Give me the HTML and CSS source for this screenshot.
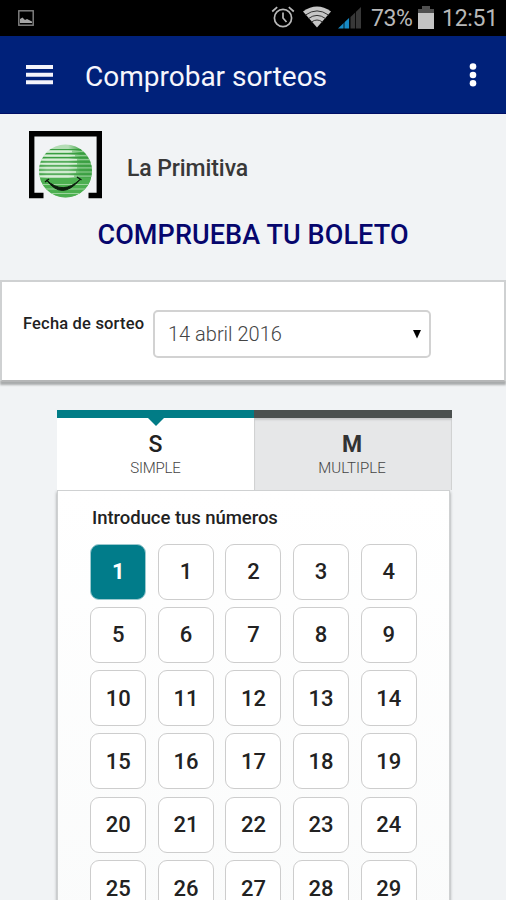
FILE: index.html
```html
<!DOCTYPE html>
<html lang="es">
<head>
<meta charset="utf-8">
<title>Comprobar sorteos</title>
<link rel="stylesheet" href="styles.css">
</head>
<body>
<div class="status">
  <svg class="st-pic" width="16" height="16" viewBox="0 0 16 16"><rect x=".8" y=".8" width="14.4" height="14.4" fill="none" stroke="#858585" stroke-width="1.4"/><path d="M2 13V9l2.500-1.500L7 10l2-1 5 2.500V13z" fill="#a5a5a5"/></svg>
  <svg class="st-alarm" width="24" height="24" viewBox="0 0 24 24" fill="none" stroke="#b9b9b9" stroke-width="1.700"><circle cx="12" cy="13" r="8.600"/><path d="M12 7.500V13l3.500 4M1.200 6.500l5-4.300M22.800 6.500l-5-4.300"/></svg>
  <svg class="st-wifi" width="28" height="22" viewBox="0 0 28 22"><path d="M0 5.500Q14-4.500 28 5.500L14 21.500z" fill="#c6c6c6"/><path d="M2.500 9Q14 .8 25.500 9M5.500 12.500Q14 6.300 22.500 12.500M8.500 16Q14 12 19.500 16" fill="none" stroke="#333" stroke-width="1"/></svg>
  <svg class="st-signal" width="24" height="22" viewBox="0 0 24 22"><path d="M0 21.500L11.500 10.500V21.500z" fill="#1789c4"/><path d="M12.500 10L23 0V21.500H12.500z" fill="#383838"/><path d="M6 12v10M11.500 8v14M17.500 2v20" stroke="#000" stroke-width=".8"/></svg>
  <span class="pct">73%</span>
  <svg class="st-batt" width="16" height="23" viewBox="0 0 16 23"><path d="M4 0h8v3h4v5H0V3h4z" fill="#505050"/><path d="M0 7h16v16H0z" fill="#c4c4c4"/></svg>
  <span class="clock">12:51</span>
</div>
<header class="bar">
  <svg class="menu" width="27" height="20" viewBox="0 0 27 20" fill="#f4f4fb"><path d="M0 0h27v4H0zM0 7.700h27v4H0zM0 15.300h27v4H0z"/></svg>
  <h1>Comprobar sorteos</h1>
  <svg class="more" width="8" height="24" viewBox="0 0 8 24" fill="#fff"><circle cx="4" cy="3.500" r="3.300"/><circle cx="4" cy="12" r="3.300"/><circle cx="4" cy="20.300" r="3.300"/></svg>
</header>
<section class="game">
  <svg class="logo" width="74" height="68" viewBox="0 0 74 68">
    <defs>
      <clipPath id="ball"><circle cx="36.500" cy="40" r="26.500"/></clipPath>
      <linearGradient id="shade" x1="0" x2="1" y1="0" y2="0"><stop offset="0" stop-color="#7ac27e"/><stop offset=".15" stop-color="#b4ddb5"/><stop offset=".55" stop-color="#b4ddb5"/><stop offset=".78" stop-color="#49a94e"/><stop offset="1" stop-color="#43a348"/></linearGradient>
    </defs>
    <path d="M14.500 64.500H2.700V2.800H70.300V64.500H59.500" fill="none" stroke="#000" stroke-width="5.400"/>
    <g clip-path="url(#ball)">
      <rect x="10" y="13" width="53" height="54" fill="url(#shade)"/>
      <path d="M10 47h53v20H10z" fill="#4caf50"/>
      <path d="M10 18.500h53M10 22.600h53M10 26.700h53M10 30.800h53M10 34.900h53M10 39h53M10 43.100h53" stroke="#389d40" stroke-width="1.200"/>
      <path d="M10 20.500h33M10 24.600h36M10 28.700h38M10 32.800h38M10 36.900h38M10 41h37M10 45.200h35" stroke="#d8eed8" stroke-width="1.400"/>
      <path d="M43 20.500h20M46 24.600h17M48 28.700h15M48 32.800h15M48 36.900h15M47 41h16M45 45.200h18" stroke="#8fcc92" stroke-width="1.200"/>
      <path d="M10 53.500h53M10 58h53M10 62.500h53" stroke="#9bd39c" stroke-width="1.200"/>
    </g>
    <path d="M17.500 49Q33 70 51 48.500Q34 64.500 17.500 49z" fill="#0b1c0d" stroke="#0b1c0d" stroke-width="1"/><path d="M16 51l4-3M48 46l4.500 3" stroke="#0b1c0d" stroke-width="1.500"/>
  </svg>
  <h2>La Primitiva</h2>
</section>
<h3 class="title">COMPRUEBA TU BOLETO</h3>
<section class="draw">
  <label>Fecha de sorteo</label>
  <div class="select"><span>14 abril 2016</span><svg width="8" height="9" viewBox="0 0 8 9"><path d="M0 0h8L4 8.500z"/></svg></div>
</section>
<main class="ticket">
  <nav class="tabs">
    <div class="tab active"><b>S</b><span>SIMPLE</span></div>
    <div class="tab"><b>M</b><span>MULTIPLE</span></div>
  </nav>
  <section class="panel">
    <h4>Introduce tus números</h4>
    <div class="grid">
      <div class="n on">1</div><div class="n">1</div><div class="n">2</div><div class="n">3</div><div class="n">4</div>
      <div class="n">5</div><div class="n">6</div><div class="n">7</div><div class="n">8</div><div class="n">9</div>
      <div class="n">10</div><div class="n">11</div><div class="n">12</div><div class="n">13</div><div class="n">14</div>
      <div class="n">15</div><div class="n">16</div><div class="n">17</div><div class="n">18</div><div class="n">19</div>
      <div class="n">20</div><div class="n">21</div><div class="n">22</div><div class="n">23</div><div class="n">24</div>
      <div class="n">25</div><div class="n">26</div><div class="n">27</div><div class="n">28</div><div class="n">29</div>
    </div>
  </section>
</main>
</body>
</html>
```
FILE: styles.css
```css
* { box-sizing: border-box; }
html, body { height: 900px; overflow: hidden; }
body { margin: 0; background: #f1f3f5; font-family: Roboto, "Liberation Sans", sans-serif; color: #222; }
h1, h2, h3, h4 { margin: 0; white-space: nowrap; }
svg { display: block; flex: none; }

.status { height: 36px; background: #000; color: #b8b8b8; display: flex; align-items: flex-start; padding-left: 18px; font-size: 23px; line-height: 36px; white-space: nowrap; }
.st-pic { margin-top: 10px; }
.st-alarm { margin: 5px 0 0 237px; }
.st-wifi { margin: 6px 0 0 8px; }
.st-signal { margin: 7px 0 0 7px; }
.pct { width: 42px; margin: 1px 0 0 9px; letter-spacing: -.4px; }
.st-batt { margin: 6px 0 0 5px; }
.clock { margin: 1px 0 0 8px; letter-spacing: -.3px; }

.bar { height: 78px; background: #00217a; border-bottom: 1px solid #000f66; display: flex; align-items: center; padding: 0 29px 0 26px; color: #f6f6fc; }
.menu { margin-top: 1px; }
.bar h1 { flex: 1; margin: 3px 0 0 32px; font-size: 28px; font-weight: 400; }

.game { height: 103px; padding: 17px 0 0 29px; display: flex; }
.game h2 { margin: 23px 0 0 24px; font-size: 23px; line-height: 30px; font-weight: 500; color: #383838; letter-spacing: -.1px; }
.title { height: 63px; text-align: center; font-size: 27px; line-height: 36px; font-weight: 500; color: #06066d; letter-spacing: .1px; }

.draw { height: 102px; background: #fff; border: 2px solid #cfd1d2; border-bottom-color: #b5b6b7; box-shadow: 0 3px 2px #a9abac; display: flex; padding: 28px 0 0 21px; }
.draw label { width: 130px; font-size: 16.500px; line-height: 28px; font-weight: 500; letter-spacing: .18px; white-space: nowrap; }
.select { width: 278px; height: 48px; border: 2px solid #d2d2d2; border-radius: 5px; display: flex; align-items: center; justify-content: space-between; padding: 0 8px 0 13px; font-size: 20px; color: #444; font-weight: 300; }

.ticket { width: 395px; margin: 28px 0 0 57px; }
.tabs { display: flex; height: 80px; }
.tab { position: relative; width: 198px; border-top: 8px solid #4b504f; background: #e6e7e8; box-shadow: inset 0 2px 2px #c8c9ca, inset 1px 0 #d4d5d6, inset -1px 0 #d4d5d6; display: flex; flex-direction: column; align-items: center; padding: 13px 2px 0 0; }
.tab.active { width: 197px; padding-right: 0; border-color: #017c86; background: #fff; box-shadow: none; }
.tab.active::before { content: ""; position: absolute; top: 0; left: 50%; margin-left: -8px; border: 8px solid transparent; border-top-color: #017c86; border-bottom: 0; }
.tab b { font-size: 23px; line-height: 27px; font-weight: 500; }
.tab:not(.active) b { font-weight: 700; color: #333; }
.tab span { font-size: 15px; line-height: 20px; font-weight: 300; color: #444; }
.tab.active span { letter-spacing: -.2px; }
.panel { width: 393px; height: 440px; background: linear-gradient(#fff, #fafbfb); border: 1px solid #cfd1d2; box-shadow: 0 2px 3px #8e9092; padding: 13px 0 0 32px; }
.panel h4 { padding-left: 2px; font-size: 18.500px; line-height: 28px; font-weight: 500; letter-spacing: -.05px; }
.grid { display: grid; grid-template-columns: repeat(5, 56px); grid-auto-rows: 56px; gap: 7.300px 11.600px; margin: 11.600px 0 0 .3px; }
.n { border: 1.500px solid #cdcdcd; border-radius: 9px; background: #fff; display: flex; align-items: center; justify-content: center; font-size: 22px; font-weight: 500; }
.n.on { background: #017c8a; border-color: #9cc9cf; color: #fff; font-weight: 700; }
```
